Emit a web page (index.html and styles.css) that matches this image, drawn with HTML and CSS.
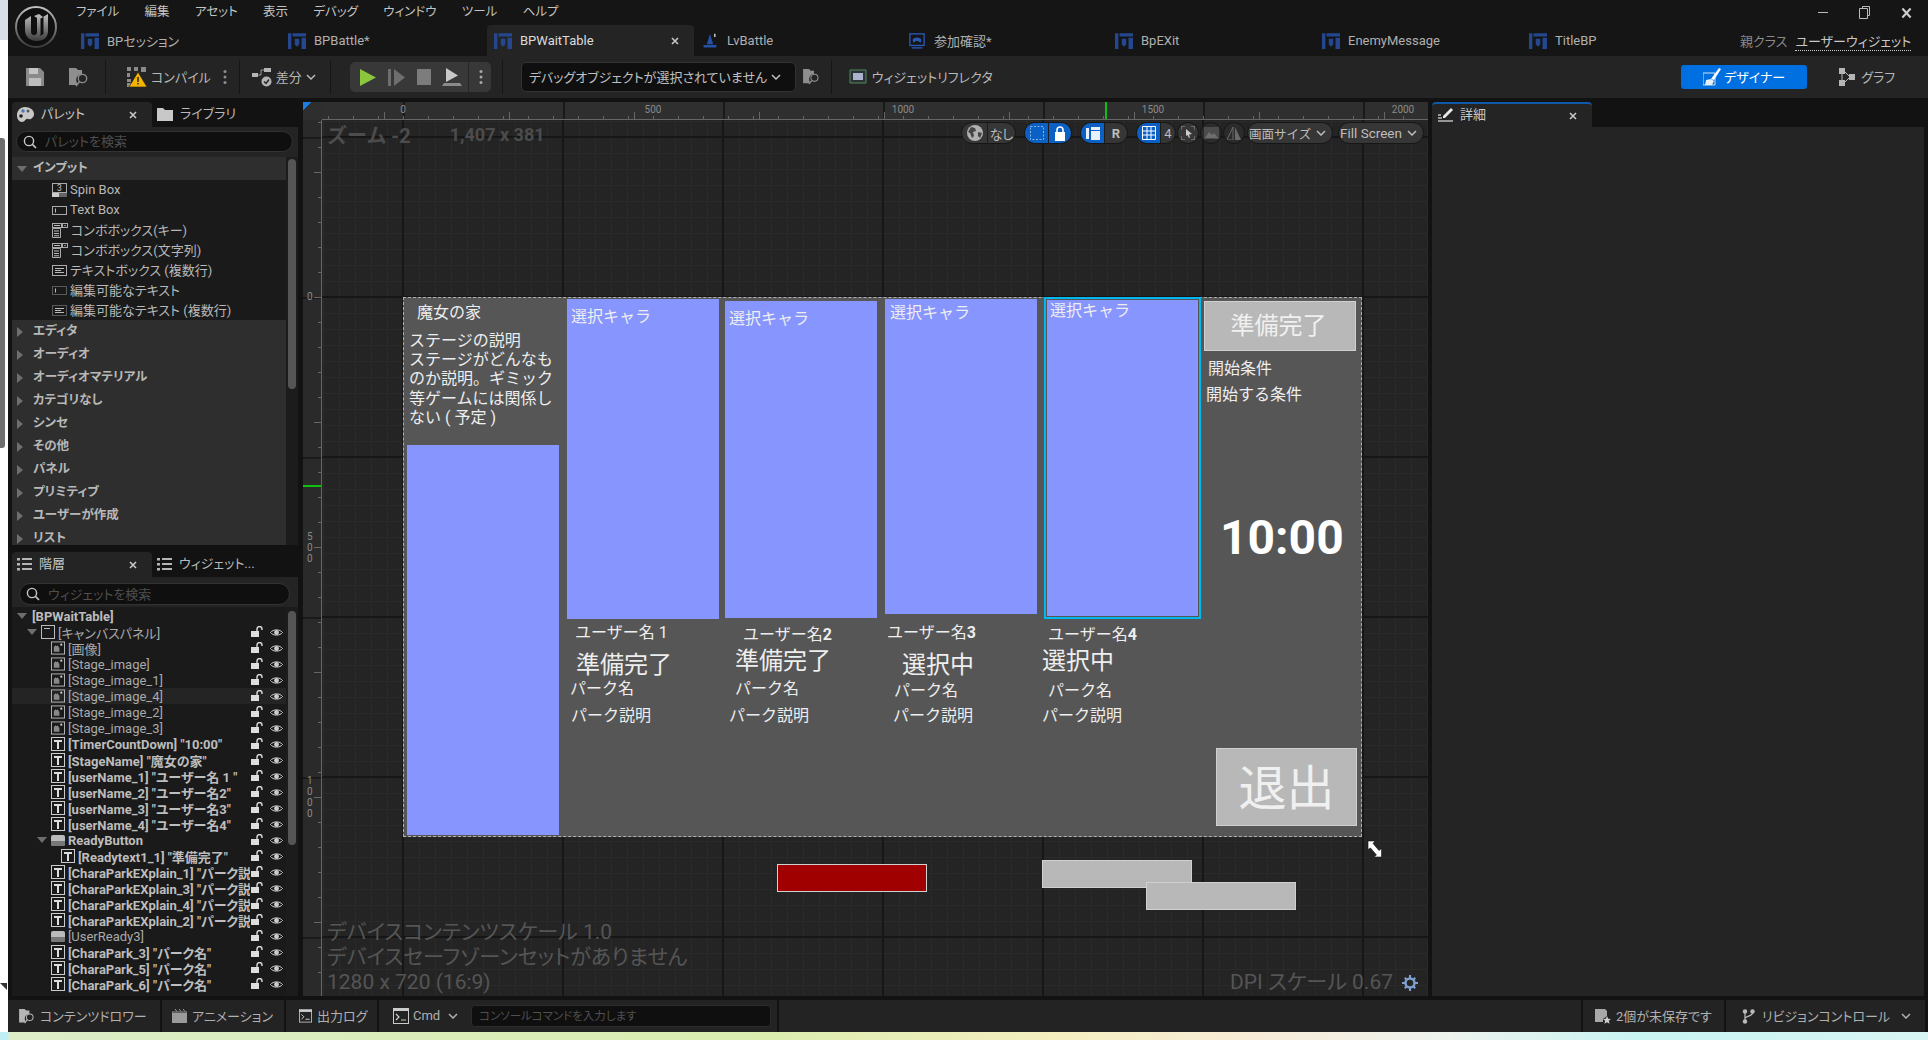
FILE: index.html
```html
<!DOCTYPE html>
<html lang="ja">
<head>
<title>BPWaitTable</title>
<meta charset="utf-8">
<link rel="stylesheet" href="styles.css">
</head>
<body>

<svg class="defs" width="0" height="0">
  <defs>
    <linearGradient id="logo-grad" x1="0" y1="0" x2="0" y2="1">
      <stop offset="0" stop-color="#c0c0c0"/><stop offset="1" stop-color="#3c3c3c"/>
    </linearGradient>
    <symbol id="i-bp" viewBox="0 0 16 14">
      <path d="M0 0h3v14H0zM4 0h12v3H4zM12 4h4v10h-4zM6 5h4v5l-2 2-2-2z" fill="#24478f"/>
    </symbol>
    <symbol id="i-chev" viewBox="0 0 10 6">
      <path d="M1 1l4 4 4-4" fill="none" stroke="currentColor" stroke-width="1.5"/>
    </symbol>
    <symbol id="i-x" viewBox="0 0 8 8">
      <path d="M1 1l6 6M7 1L1 7" stroke="currentColor" stroke-width="1.6"/>
    </symbol>
    <symbol id="i-search" viewBox="0 0 14 14">
      <circle cx="6" cy="6" r="4.6" fill="none" stroke="currentColor" stroke-width="1.4"/>
      <path d="M9.4 9.4L13 13" stroke="currentColor" stroke-width="1.6"/>
    </symbol>
    <symbol id="i-dots" viewBox="0 0 4 16">
      <circle cx="2" cy="2.5" r="1.5" fill="currentColor"/><circle cx="2" cy="8" r="1.5" fill="currentColor"/><circle cx="2" cy="13.5" r="1.5" fill="currentColor"/>
    </symbol>
    <symbol id="i-list" viewBox="0 0 15 13">
      <path d="M0 0h3v2.4H0zM5 0h10v2H5zM0 5h3v2.4H0zM5 5h10v2H5zM0 10h3v2.4H0zM5 10h10v2H5z" fill="#b5b5b5"/>
    </symbol>
    <symbol id="i-spin" viewBox="0 0 15 14">
      <rect x=".5" y=".5" width="14" height="9" fill="none" stroke="#aaa"/>
      <text x="7.5" y="8" font-size="8.5" text-anchor="middle" fill="#ccc" font-family="Roboto">3</text>
      <path d="M0 10h7v4H0z" fill="#ccc"/><path d="M7 10h8v4H7z" fill="#666"/>
    </symbol>
    <symbol id="i-textbox" viewBox="0 0 15 9">
      <rect x=".5" y=".5" width="14" height="8" fill="none" stroke="#aaa"/><path d="M3 2.5h1v4H3z" fill="#bbb"/>
    </symbol>
    <symbol id="i-combo" viewBox="0 0 16 15">
      <rect x=".5" y=".5" width="9" height="4" fill="none" stroke="#aaa"/>
      <rect x="10.5" y=".5" width="5" height="4" fill="none" stroke="#aaa"/>
      <path d="M2 2h6v1H2zM12 2h2l-1 1.4z" fill="#bbb"/>
      <path d="M.5 5.500h8v9h-8z" fill="none" stroke="#aaa"/>
      <path d="M2 7.500h5v1H2zM2 10h5v1H2zM2 12.300h5v1H2z" fill="#bbb"/>
    </symbol>
    <symbol id="i-multi" viewBox="0 0 15 11">
      <rect x=".5" y=".5" width="14" height="10" fill="none" stroke="#aaa"/>
      <path d="M3 3h9v1H3zM3 5h6v1H3zM3 7h9v1H3z" fill="#bbb"/>
    </symbol>
    <symbol id="i-edit" viewBox="0 0 15 9">
      <rect x=".5" y=".5" width="14" height="8" fill="none" stroke="#999" stroke-dasharray="1 1"/><path d="M3 2.500h1v4H3z" fill="#bbb"/>
    </symbol>
    <symbol id="i-editm" viewBox="0 0 15 11">
      <rect x=".5" y=".5" width="14" height="10" fill="none" stroke="#999" stroke-dasharray="1 1"/>
      <path d="M3 3h9v1H3zM3 5h6v1H3zM3 7h9v1H3z" fill="#bbb"/>
    </symbol>
    <symbol id="i-canvas" viewBox="0 0 14 14">
      <rect x=".5" y=".5" width="13" height="13" fill="none" stroke="#bbb"/><path d="M3 3h6v1H3z" fill="#bbb"/>
    </symbol>
    <symbol id="i-img" viewBox="0 0 15 14">
      <rect x=".5" y=".5" width="14" height="13" fill="none" stroke="#bbb"/>
      <path d="M3 11V6l2-2 1 1 1-1 2 3v4z" fill="#888"/><circle cx="11" cy="3.500" r="1.200" fill="#ccc"/>
    </symbol>
    <symbol id="i-t" viewBox="0 0 14 14">
      <rect x=".5" y=".5" width="13" height="13" fill="none" stroke="#ccc"/>
      <path d="M3 3h8v2H8v7H6V5H3z" fill="#ddd"/>
    </symbol>
    <symbol id="i-btn" viewBox="0 0 14 11">
      <rect width="14" height="11" rx="2" fill="#bbb"/><path d="M0 6h14v3a2 2 0 0 1-2 2H2a2 2 0 0 1-2-2z" fill="#777"/>
    </symbol>
    <symbol id="i-lock" viewBox="0 0 12 11">
      <path d="M0 5h8v6H0z" fill="#ddd"/>
      <path d="M6 5V3a2.500 2.500 0 0 1 5 0v1" fill="none" stroke="#ddd" stroke-width="1.400"/>
    </symbol>
    <symbol id="i-eye" viewBox="0 0 13 9">
      <path d="M.5 4.500C3 1 10 1 12.500 4.500 10 8 3 8 .5 4.500z" fill="none" stroke="#ccc"/>
      <circle cx="6.500" cy="4.500" r="2.400" fill="#ccc"/>
    </symbol>
    <symbol id="i-folder" viewBox="0 0 16 13">
      <path d="M0 0h6l2 2h8v11H0z" fill="#c8c8c8"/>
    </symbol>
    <symbol id="i-findfolder" viewBox="0 0 20 19">
      <path d="M0 0h7l2 2h4v4a6 6 0 0 0-5 9v2H0z" fill="currentColor"/>
      <circle cx="13.500" cy="10.500" r="4.200" fill="none" stroke="currentColor" stroke-width="1.300"/>
      <path d="M10.500 13.500L7 18" stroke="currentColor" stroke-width="1.500"/>
    </symbol>
    <symbol id="i-term" viewBox="0 0 16 16">
      <rect x=".5" y=".5" width="15" height="15" fill="none" stroke="#ccc"/>
      <path d="M0 0h16v3H0z" fill="#ccc"/><path d="M3 6l3 3-3 3M8 12h5" fill="none" stroke="#ccc" stroke-width="1.200"/>
    </symbol>
  </defs>
</svg>

<div class="screen">
  <aside class="side-strip">
    <div class="strip-top"></div>
    <div class="strip-thumb"></div>
    <div class="strip-corner"></div>
  </aside>

  <div class="window">

    <header class="titlebar">
      <svg class="logo" viewBox="0 0 42 42" width="42" height="42">
        <circle cx="21" cy="21" r="20" fill="#101010" stroke="url(#logo-grad)" stroke-width="2"/>
        <path d="M10 14l6-4v16c0 4 5 4 6 1V12l-3-2 5-2 4 3v0l5-3v17c0 6-4 10-11 10-7 0-12-4-12-11z" fill="url(#logo-grad)"/>
        <path d="M25.500 12.500l3-1.500v17l-3 2z" fill="#101010"/>
      </svg>
      <div class="title-main">
        <div class="menu-row">
          <nav class="menu">
            <span>ファイル</span><span>編集</span><span>アセット</span><span>表示</span><span>デバッグ</span><span>ウィンドウ</span><span>ツール</span><span>ヘルプ</span>
          </nav>
          <div class="win-buttons">
            <span class="win-min"></span>
            <svg width="11" height="13" viewBox="0 0 11 13"><path d="M3.500 2.500V.5h7v9h-2M.5 2.500h8v10h-8z" fill="none" stroke="#bbb"/></svg>
            <svg width="11" height="12" viewBox="0 0 8 8" preserveAspectRatio="none"><use href="#i-x" color="#ccc"/></svg>
          </div>
        </div>
        <div class="tab-row">
          <div class="doc-tab"><svg class="doc-icon"><use href="#i-bp"/></svg>BPセッション</div>
          <div class="doc-tab"><svg class="doc-icon"><use href="#i-bp"/></svg>BPBattle*</div>
          <div class="doc-tab active"><svg class="doc-icon"><use href="#i-bp"/></svg>BPWaitTable<svg class="tab-x"><use href="#i-x"/></svg></div>
          <div class="doc-tab"><svg class="doc-icon" viewBox="0 0 18 20"><path d="M9 1l4 13H5zM1 15h16v3H1z" fill="#2450a8"/><path d="M14 1h2v4h-2z" fill="#bbb"/></svg>LvBattle</div>
          <div class="doc-tab"><svg class="doc-icon" viewBox="0 0 18 18"><rect x="1" y="1" width="16" height="13" fill="none" stroke="#2a58b8" stroke-width="1.500"/><path d="M4 8c1-4 9-4 10 0l-1 3-3-2H8l-3 2z" fill="#2a58b8"/><path d="M3 16h12v1.500H3z" fill="#2a58b8"/></svg>参加確認*</div>
          <div class="doc-tab"><svg class="doc-icon"><use href="#i-bp"/></svg>BpEXit</div>
          <div class="doc-tab"><svg class="doc-icon"><use href="#i-bp"/></svg>EnemyMessage</div>
          <div class="doc-tab"><svg class="doc-icon"><use href="#i-bp"/></svg>TitleBP</div>
          <div class="parent-class"><span class="parent-label">親クラス</span><span class="parent-link">ユーザーウィジェット</span></div>
        </div>
      </div>
    </header>

    <div class="toolbar">
      <svg class="tool-save" width="18" height="18" viewBox="0 0 18 18"><path d="M0 0h14l4 4v14H0z" fill="#8a8a8a"/><path d="M3 0h9v6H3z" fill="#c4c4c4"/><path d="M3 10h12v8H3z" fill="#bdbdbd"/></svg>
      <svg class="tool-find" width="20" height="19"><use href="#i-findfolder"/></svg>
      <i class="tool-sep sep-a"></i>
      <svg class="tool-compile" width="20" height="20" viewBox="0 0 20 20">
        <path d="M0 0h4v4H0zM7 0h4v4H7zM14 0h5v5h-5zM0 6h3v4H0zM0 12h4v3H0zM0 16h4v4H0z" fill="#8a8a8a"/>
        <path d="M11 5L20 20H2z" fill="#f5b400" stroke="#1c1c1c" stroke-width=".6"/><path d="M10.300 10h1.400v5h-1.400zM10.300 16h1.400v1.500h-1.400z" fill="#1c1c1c"/>
      </svg>
      <span class="tool-text compile-text">コンパイル</span>
      <svg class="tool-dots" width="4" height="16"><use href="#i-dots"/></svg>
      <i class="tool-sep sep-b"></i>
      <svg class="tool-diff" width="20" height="20" viewBox="0 0 20 20"><path d="M0 6h6v4H0zM12 1h7v4h-7z" fill="#b5b5b5"/><path d="M6 8h3V3h3" fill="none" stroke="#999"/><circle cx="14.500" cy="14.500" r="5" fill="#b5b5b5"/><path d="M12 14.500l2 2 3-4" fill="none" stroke="#222" stroke-width="1.400"/></svg>
      <span class="tool-text diff-text">差分</span>
      <svg class="tool-chev" width="10" height="6"><use href="#i-chev"/></svg>
      <i class="tool-sep sep-c"></i>
      <div class="play-group">
        <svg class="pg-play" width="16" height="17" viewBox="0 0 16 17"><path d="M0 0l16 8.500L0 17z" fill="#8cc63f"/></svg>
        <svg class="pg-step" width="17" height="17" viewBox="0 0 17 17"><path d="M0 0h3v17H0z" fill="#6e6e6e"/><path d="M6 0l11 8.500L6 17z" fill="#6e6e6e"/></svg>
        <svg class="pg-stop" width="14" height="16"><rect width="14" height="16" fill="#7c7c7c"/></svg>
        <svg class="pg-possess" width="20" height="18" viewBox="0 0 20 18"><path d="M4 0l12 7.500L4 14z" fill="#c8c8c8"/><path d="M2 15h16l2 3H0z" fill="#8a8a8a"/></svg>
        <i class="pg-divider"></i>
        <svg class="pg-dots" width="4" height="16"><use href="#i-dots"/></svg>
      </div>
      <i class="tool-sep sep-d"></i>
      <div class="debug-select"><span>デバッグオブジェクトが選択されていません</span><svg width="10" height="6"><use href="#i-chev"/></svg></div>
      <svg class="tool-find2" width="17" height="16" viewBox="0 0 20 19"><use href="#i-findfolder"/></svg>
      <i class="tool-sep sep-e"></i>
      <svg class="tool-reflect" width="18" height="16" viewBox="0 0 18 16"><path d="M1 1h16v13H1z" fill="#2c3238" stroke="#4e8a5a"/><path d="M4 4h10v7H4z" fill="#aab4cc"/></svg>
      <span class="tool-text">ウィジェットリフレクタ</span>
      <div class="designer-btn">
        <svg width="18" height="18" viewBox="0 0 18 18"><path d="M0 5h12v12H0z" fill="none" stroke="#cfe2f7"/><path d="M16 0l2 1-7 11-3-1z" fill="#fff"/><path d="M3 12l5-1 3 2-2 4H2z" fill="#e6eef8"/></svg>
        <span>デザイナー</span>
      </div>
      <svg class="graph-icon" width="16" height="18" viewBox="0 0 16 18"><path d="M0 0h6v6H0zM10 6h6v6h-6zM0 12h6v6H0z" fill="#b5b5b5"/><path d="M3 6v6M6 4l4 4M6 14l4-4" stroke="#b5b5b5"/></svg>
      <span class="tool-text graph-text">グラフ</span>
    </div>

    <main class="workspace">

      <div class="left-col">
        <section class="panel palette">
          <div class="panel-tabs">
            <div class="panel-tab active">
              <svg width="17" height="15" viewBox="0 0 17 15"><path d="M8 0c5 0 9 3 9 7s-4 6-6 5-3 3-6 3-5-3-5-7 3-8 8-8z" fill="#c8c8c8"/><circle cx="6" cy="4" r="1.800" fill="#4a78b8"/><circle cx="11" cy="4" r="1.500" fill="#5a5a5a"/><circle cx="4" cy="9" r="1.800" fill="#1c1c1c"/></svg>
              <span>パレット</span><svg class="tab-x"><use href="#i-x"/></svg>
            </div>
            <div class="panel-tab"><svg width="16" height="13"><use href="#i-folder"/></svg><span>ライブラリ</span></div>
          </div>
          <div class="search-wrap"><div class="search"><svg width="14" height="14"><use href="#i-search"/></svg><span>パレットを検索</span></div></div>
          <div class="panel-scroll">
            <div class="palette-list">
              <div class="cat open"><i class="arrow down"></i><span>インプット</span></div>
              <div class="item"><svg width="15" height="14"><use href="#i-spin"/></svg><span>Spin Box</span></div>
              <div class="item"><svg width="15" height="9"><use href="#i-textbox"/></svg><span>Text Box</span></div>
              <div class="item"><svg width="16" height="15"><use href="#i-combo"/></svg><span>コンボボックス(キー)</span></div>
              <div class="item"><svg width="16" height="15"><use href="#i-combo"/></svg><span>コンボボックス(文字列)</span></div>
              <div class="item"><svg width="15" height="11"><use href="#i-multi"/></svg><span>テキストボックス (複数行)</span></div>
              <div class="item"><svg width="15" height="9"><use href="#i-edit"/></svg><span>編集可能なテキスト</span></div>
              <div class="item"><svg width="15" height="11"><use href="#i-editm"/></svg><span>編集可能なテキスト (複数行)</span></div>
              <div class="cat"><i class="arrow"></i><span>エディタ</span></div>
              <div class="cat"><i class="arrow"></i><span>オーディオ</span></div>
              <div class="cat"><i class="arrow"></i><span>オーディオマテリアル</span></div>
              <div class="cat"><i class="arrow"></i><span>カテゴリなし</span></div>
              <div class="cat"><i class="arrow"></i><span>シンセ</span></div>
              <div class="cat"><i class="arrow"></i><span>その他</span></div>
              <div class="cat"><i class="arrow"></i><span>パネル</span></div>
              <div class="cat"><i class="arrow"></i><span>プリミティブ</span></div>
              <div class="cat"><i class="arrow"></i><span>ユーザーが作成</span></div>
              <div class="cat"><i class="arrow"></i><span>リスト</span></div>
            </div>
            <div class="scroll-track"><div class="scroll-thumb thumb-palette"></div></div>
          </div>
        </section>

        <section class="panel hierarchy">
          <div class="panel-tabs">
            <div class="panel-tab active"><svg width="15" height="13"><use href="#i-list"/></svg><span>階層</span><svg class="tab-x"><use href="#i-x"/></svg></div>
            <div class="panel-tab"><svg width="15" height="13"><use href="#i-list"/></svg><span>ウィジェット...</span></div>
          </div>
          <div class="search-wrap"><div class="search short"><svg width="14" height="14"><use href="#i-search"/></svg><span>ウィジェットを検索</span></div></div>
          <div class="panel-scroll">
            <div class="tree">
              <div class="row lv0 bold"><i class="arrow down"></i><span class="name">[BPWaitTable]</span></div>
              <div class="row lv1"><i class="arrow down"></i><svg class="ico"><use href="#i-canvas"/></svg><span class="name">[キャンバスパネル]</span><svg class="lock"><use href="#i-lock"/></svg><svg class="eye"><use href="#i-eye"/></svg></div>
              <div class="row lv2"><svg class="ico"><use href="#i-img"/></svg><span class="name">[画像]</span><svg class="lock"><use href="#i-lock"/></svg><svg class="eye"><use href="#i-eye"/></svg></div>
              <div class="row lv2"><svg class="ico"><use href="#i-img"/></svg><span class="name">[Stage_image]</span><svg class="lock"><use href="#i-lock"/></svg><svg class="eye"><use href="#i-eye"/></svg></div>
              <div class="row lv2"><svg class="ico"><use href="#i-img"/></svg><span class="name">[Stage_image_1]</span><svg class="lock"><use href="#i-lock"/></svg><svg class="eye"><use href="#i-eye"/></svg></div>
              <div class="row lv2 hover"><svg class="ico"><use href="#i-img"/></svg><span class="name">[Stage_image_4]</span><svg class="lock"><use href="#i-lock"/></svg><svg class="eye"><use href="#i-eye"/></svg></div>
              <div class="row lv2"><svg class="ico"><use href="#i-img"/></svg><span class="name">[Stage_image_2]</span><svg class="lock"><use href="#i-lock"/></svg><svg class="eye"><use href="#i-eye"/></svg></div>
              <div class="row lv2"><svg class="ico"><use href="#i-img"/></svg><span class="name">[Stage_image_3]</span><svg class="lock"><use href="#i-lock"/></svg><svg class="eye"><use href="#i-eye"/></svg></div>
              <div class="row lv2 bold"><svg class="ico"><use href="#i-t"/></svg><span class="name">[TimerCountDown] "10:00"</span><svg class="lock"><use href="#i-lock"/></svg><svg class="eye"><use href="#i-eye"/></svg></div>
              <div class="row lv2 bold"><svg class="ico"><use href="#i-t"/></svg><span class="name">[StageName] "魔女の家"</span><svg class="lock"><use href="#i-lock"/></svg><svg class="eye"><use href="#i-eye"/></svg></div>
              <div class="row lv2 bold"><svg class="ico"><use href="#i-t"/></svg><span class="name">[userName_1] "ユーザー名 1 "</span><svg class="lock"><use href="#i-lock"/></svg><svg class="eye"><use href="#i-eye"/></svg></div>
              <div class="row lv2 bold"><svg class="ico"><use href="#i-t"/></svg><span class="name">[userName_2] "ユーザー名2"</span><svg class="lock"><use href="#i-lock"/></svg><svg class="eye"><use href="#i-eye"/></svg></div>
              <div class="row lv2 bold"><svg class="ico"><use href="#i-t"/></svg><span class="name">[userName_3] "ユーザー名3"</span><svg class="lock"><use href="#i-lock"/></svg><svg class="eye"><use href="#i-eye"/></svg></div>
              <div class="row lv2 bold"><svg class="ico"><use href="#i-t"/></svg><span class="name">[userName_4] "ユーザー名4"</span><svg class="lock"><use href="#i-lock"/></svg><svg class="eye"><use href="#i-eye"/></svg></div>
              <div class="row lv1b bold"><i class="arrow down"></i><svg class="ico btn"><use href="#i-btn"/></svg><span class="name">ReadyButton</span><svg class="lock"><use href="#i-lock"/></svg><svg class="eye"><use href="#i-eye"/></svg></div>
              <div class="row lv3 bold"><svg class="ico"><use href="#i-t"/></svg><span class="name">[Readytext1_1] "準備完了"</span><svg class="lock"><use href="#i-lock"/></svg><svg class="eye"><use href="#i-eye"/></svg></div>
              <div class="row lv2 bold"><svg class="ico"><use href="#i-t"/></svg><span class="name">[CharaParkEXplain_1] "パーク説明"</span><svg class="lock"><use href="#i-lock"/></svg><svg class="eye"><use href="#i-eye"/></svg></div>
              <div class="row lv2 bold"><svg class="ico"><use href="#i-t"/></svg><span class="name">[CharaParkEXplain_3] "パーク説明"</span><svg class="lock"><use href="#i-lock"/></svg><svg class="eye"><use href="#i-eye"/></svg></div>
              <div class="row lv2 bold"><svg class="ico"><use href="#i-t"/></svg><span class="name">[CharaParkEXplain_4] "パーク説明"</span><svg class="lock"><use href="#i-lock"/></svg><svg class="eye"><use href="#i-eye"/></svg></div>
              <div class="row lv2 bold"><svg class="ico"><use href="#i-t"/></svg><span class="name">[CharaParkEXplain_2] "パーク説明"</span><svg class="lock"><use href="#i-lock"/></svg><svg class="eye"><use href="#i-eye"/></svg></div>
              <div class="row lv2"><svg class="ico btn"><use href="#i-btn"/></svg><span class="name">[UserReady3]</span><svg class="lock"><use href="#i-lock"/></svg><svg class="eye"><use href="#i-eye"/></svg></div>
              <div class="row lv2 bold"><svg class="ico"><use href="#i-t"/></svg><span class="name">[CharaPark_3] "パーク名"</span><svg class="lock"><use href="#i-lock"/></svg><svg class="eye"><use href="#i-eye"/></svg></div>
              <div class="row lv2 bold"><svg class="ico"><use href="#i-t"/></svg><span class="name">[CharaPark_5] "パーク名"</span><svg class="lock"><use href="#i-lock"/></svg><svg class="eye"><use href="#i-eye"/></svg></div>
              <div class="row lv2 bold"><svg class="ico"><use href="#i-t"/></svg><span class="name">[CharaPark_6] "パーク名"</span><svg class="lock"><use href="#i-lock"/></svg><svg class="eye"><use href="#i-eye"/></svg></div>
            </div>
            <div class="scroll-track"><div class="scroll-thumb thumb-tree"></div></div>
          </div>
        </section>
      </div>

      <section class="canvas">
        <div class="ruler-corner"></div>
        <div class="ruler-top">
          <span class="rt-label rt-0">0</span>
          <span class="rt-label rt-500">500</span>
          <span class="rt-label rt-1000">1000</span>
          <span class="rt-label rt-1500">1500</span>
          <span class="rt-label rt-2000">2000</span>
          <i class="rt-green"></i>
        </div>
        <div class="ruler-left">
          <span class="rl-label rl-0">0</span>
          <span class="rl-label rl-500">5<br>0<br>0</span>
          <span class="rl-label rl-1000">1<br>0<br>0<br>0</span>
          <i class="rl-green"></i>
        </div>

        <div class="stage">
          <div class="zoom-text"><span>ズーム -2</span><span class="zoom-size">1,407 x 381</span></div>

          <div class="stage-tools">
            <div class="pill">
              <span class="seg seg-globe"><svg width="16" height="16" viewBox="0 0 16 16"><circle cx="8" cy="8" r="8" fill="#b0b0b0"/><path d="M4 2l4 1 1 3-3 1 1 4-2 2-2-5-2-1zM11 7l4 1-2 5-2-2z" fill="#444"/></svg></span>
              <span class="seg seg-nashi">なし</span>
            </div>
            <div class="pill">
              <span class="seg on seg-box"><svg width="14" height="14"><rect x=".5" y=".5" width="13" height="13" fill="none" stroke="#8ab4e8" stroke-dasharray="2 1.500"/></svg></span>
              <span class="seg on seg-lock"><svg width="12" height="15" viewBox="0 0 12 15"><path d="M1 6h10v9H1z" fill="#fff"/><path d="M3 6V4a3 3 0 0 1 6 0v2" fill="none" stroke="#fff" stroke-width="1.600"/></svg></span>
            </div>
            <div class="pill">
              <span class="seg on seg-box"><svg width="14" height="13" viewBox="0 0 14 13"><path d="M0 1h3v11H0zM5 0h9v3H5zM5 4h9v9H5z" fill="#e8f0fb"/></svg></span>
              <span class="seg seg-r">R</span>
            </div>
            <div class="pill">
              <span class="seg on seg-box"><svg width="14" height="14" viewBox="0 0 14 14"><path d="M.5.500h13v13H.5zM5 .500v13M9 .500v13M.5 5h13M.5 9h13" fill="none" stroke="#fff"/></svg></span>
              <span class="seg seg-four">4</span>
            </div>
            <div class="pill round"><svg width="14" height="14" viewBox="0 0 14 14"><path d="M0 4V0h4M10 0h4v4M14 10v4h-4M4 14H0v-4" fill="none" stroke="#999"/><path d="M5 3l6 5-3 .500 1 3-1 .500-1.500-3L5 10z" fill="#ccc"/></svg></div>
            <div class="pill round dim"><svg width="15" height="12" viewBox="0 0 15 12"><path d="M0 0h15v12H0z" fill="#4c4c4c"/><path d="M1 11l4-6 3 3 2-2 4 5z" fill="#6e6e6e"/></svg></div>
            <div class="pill round dim"><svg width="16" height="14" viewBox="0 0 16 14"><path d="M7 1v13H1z" fill="none" stroke="#6a6a6a"/><path d="M9 1v13h6z" fill="#6a6a6a"/></svg></div>
            <div class="pill select size-sel">画面サイズ<svg width="10" height="6"><use href="#i-chev"/></svg></div>
            <div class="pill select fill-sel">Fill Screen<svg width="10" height="6"><use href="#i-chev"/></svg></div>
          </div>

          <div class="design">
            <div class="w-text name-stage">魔女の家</div>
            <div class="w-text stage-desc">ステージの説明<br>ステージがどんなも<br>のか説明。ギミック<br>等ゲームには関係し<br>ない ( 予定 )</div>

            <div class="w-image img-stage"></div>
            <div class="w-image img-c1"></div>
            <div class="w-image img-c2"></div>
            <div class="w-image img-c3"></div>
            <div class="w-image img-c4"></div>

            <div class="w-text pick p1">選択キャラ</div>
            <div class="w-text pick p2">選択キャラ</div>
            <div class="w-text pick p3">選択キャラ</div>
            <div class="w-text pick p4">選択キャラ</div>

            <div class="w-text u1">ユーザー名 1</div>
            <div class="w-text u2">ユーザー名<b>2</b></div>
            <div class="w-text u3">ユーザー名<b>3</b></div>
            <div class="w-text u4">ユーザー名<b>4</b></div>

            <div class="w-text big s1">準備完了</div>
            <div class="w-text big s2">準備完了</div>
            <div class="w-text big s3">選択中</div>
            <div class="w-text big s4">選択中</div>

            <div class="w-text n1">パーク名</div>
            <div class="w-text n2">パーク名</div>
            <div class="w-text n3">パーク名</div>
            <div class="w-text n4">パーク名</div>

            <div class="w-text e1">パーク説明</div>
            <div class="w-text e2">パーク説明</div>
            <div class="w-text e3">パーク説明</div>
            <div class="w-text e4">パーク説明</div>

            <div class="w-button ready">準備完了</div>
            <div class="w-text cond1">開始条件</div>
            <div class="w-text cond2">開始する条件</div>
            <div class="w-text timer">10:00</div>
            <div class="w-button leave">退出</div>
          </div>

          <div class="off-red"></div>
          <div class="off-gray g1"></div>
          <div class="off-gray g2"></div>
          <svg class="resize-cursor" width="18" height="18" viewBox="0 0 18 18"><path d="M1 1h7L6 3.500l6 7L14.500 8.500V17H7l2.500-2-6-7L1 9.500z" fill="#fff" stroke="#111" stroke-width=".6"/></svg>

          <div class="device-info">
            <span>デバイスコンテンツスケール 1.0</span>
            <span>デバイスセーフゾーンセットがありません</span>
            <span>1280 x 720 (16:9)</span>
          </div>
          <div class="dpi"><span>DPI スケール 0.67</span>
            <svg width="16" height="16" viewBox="0 0 16 16"><circle cx="8" cy="8" r="4.500" fill="none" stroke="#7f9fd0" stroke-width="2.500"/><path d="M7 0h2v3H7zM7 13h2v3H7zM0 7h3v2H0zM13 7h3v2h-3zM2 3.500L3.500 2l2 2L4 5.500zM10.500 12l1.500-1.500 2 2L12.500 14zM12.500 2L14 3.500l-2 2L10.500 4zM4 10.500L5.500 12l-2 2L2 12.500z" fill="#7f9fd0"/></svg>
          </div>
        </div>
      </section>

      <section class="details">
        <div class="panel-tabs">
          <div class="panel-tab active detail-tab">
            <svg width="15" height="15" viewBox="0 0 15 15"><path d="M13 0l2 2-8 8H5V8z" fill="#e8e8e8"/><path d="M0 10h4M0 13h15M0 7h3" stroke="#bbb" stroke-width="1.300"/></svg>
            <span>詳細</span><svg class="tab-x"><use href="#i-x"/></svg>
          </div>
        </div>
        <div class="details-body"></div>
      </section>
    </main>

    <footer class="statusbar">
      <div class="st-item st-drawer"><svg width="16" height="15" viewBox="0 0 20 19"><use href="#i-findfolder" color="#b5b5b5"/></svg><span>コンテンツドロワー</span></div>
      <div class="st-item st-anim"><svg width="15" height="14" viewBox="0 0 15 14"><path d="M0 5h15v9H0z" fill="#9a9a9a"/><path d="M0 3h15v1.500H0zM3 0l2 2.500M7 0l2 2.500M11 0l2 2.500" stroke="#9a9a9a" fill="none"/></svg><span>アニメーション</span></div>
      <div class="st-item st-log"><svg width="13" height="16"><use href="#i-term"/></svg><span>出力ログ</span></div>
      <div class="st-item st-cmd">
        <svg width="16" height="16"><use href="#i-term"/></svg><span>Cmd</span><svg class="cmd-chev" width="10" height="6"><use href="#i-chev"/></svg>
        <div class="cmd-input">コンソールコマンドを入力します</div>
      </div>
      <div class="st-fill"></div>
      <div class="st-item st-unsaved"><svg width="16" height="15" viewBox="0 0 16 15"><path d="M0 0h10l2 2v5l-4 3v3H0z" fill="#a8a8a8"/><path d="M12 7l1.200 2.800 2.800.2-2.200 1.800.8 3-2.600-1.600-2.600 1.600.8-3L8 10l2.800-.2z" fill="#cfcfcf"/></svg><span>2個が未保存です</span></div>
      <div class="st-item st-rev"><svg width="13" height="15" viewBox="0 0 13 15"><circle cx="3" cy="2.500" r="2.200" fill="#bbb"/><circle cx="3" cy="12.500" r="2.200" fill="#bbb"/><circle cx="10.500" cy="2.500" r="2.200" fill="#bbb"/><path d="M3 3v8M10.500 4c0 3-6 3-7 5" fill="none" stroke="#bbb" stroke-width="1.200"/></svg><span>リビジョンコントロール</span><svg class="cmd-chev" width="10" height="6"><use href="#i-chev"/></svg></div>
    </footer>
  </div>
</div>

<div class="desk-strip"></div>

</body>
</html>
```

FILE: styles.css
```css
* {
  box-sizing: border-box;
}

html, body {
  margin: 0;
  height: 100%;
  overflow: hidden;
}

body {
  display: flex;
  flex-direction: column;
  background: #fff;
  font-family: Roboto, "Noto Sans CJK JP", sans-serif;
  font-size: 13px;
  color: #c0c0c0;
  font-feature-settings: "palt";
}

.defs {
  position: absolute;
}

svg {
  flex: none;
  display: block;
}

.screen {
  display: flex;
  height: 1032px;
}

.desk-strip {
  height: 8px;
  background: linear-gradient(to right, #bfeef5 0, #bfeef5 8px, #dcedc8 9px, #dcedb0 40%, #f5eec0 55%, #f8ecd8 65%, #eef3ee 75%, #c8f4f2 85%, #d8f6f4 100%);
}

/* Bit of the desktop left of the editor window */
.side-strip {
  flex: none;
  width: 8px;
  display: flex;
  flex-direction: column;
  background: #fff;
}

.strip-top {
  height: 40px;
  background: #d8dfe8;
}

.strip-thumb {
  width: 5px;
  height: 310px;
  margin-top: 98px;
  border-radius: 0 3px 3px 0;
  background: #6e6e6e;
}

.strip-corner {
  width: 0;
  height: 0;
  margin-top: 535px;
  border-top: 7px solid #333;
  border-left: 7px solid transparent;
}

.window {
  flex: 1;
  min-width: 0;
  display: flex;
  flex-direction: column;
  background: #121212;
}

/* Title bar and document tabs */
.titlebar {
  flex: none;
  height: 56px;
  display: flex;
  background: #151515;
}

.logo {
  margin: 6px 0 0 7px;
}

.title-main {
  flex: 1;
  display: flex;
  flex-direction: column;
  margin-left: 17px;
}

.menu-row {
  height: 25px;
  display: flex;
  align-items: center;
}

.menu {
  display: flex;
  gap: 25.300px;
  padding: 0 0 4px 2px;
  font-size: 12.500px;
  color: #c4c4c4;
}

.win-buttons {
  margin-left: auto;
  display: flex;
  align-items: center;
  gap: 31px;
  padding-right: 16px;
}

.win-min {
  width: 10px;
  height: 1px;
  background: #bbb;
}

.tab-row {
  flex: 1;
  display: flex;
}

.doc-tab {
  width: 207px;
  display: flex;
  align-items: center;
  gap: 8px;
  padding-left: 7px;
  font-size: 13px;
  color: #b0b0b0;
}

.doc-tab.active {
  margin-left: -1px;
  border-radius: 4px 4px 0 0;
  background: #242424;
  color: #dcdcdc;
}

.doc-icon {
  width: 18px;
  height: 16px;
}

.tab-x {
  width: 8px;
  height: 8px;
  margin-left: auto;
  margin-right: 15px;
  color: #c8c8c8;
}

.parent-class {
  display: flex;
  align-items: center;
  gap: 8px;
  margin-left: 11px;
  font-size: 13px;
}

.parent-label {
  color: #8a8a8a;
}

.parent-link {
  color: #c8c8c8;
  border-bottom: 1px dotted #c8c8c8;
}

/* Main toolbar */
.toolbar {
  flex: none;
  height: 42px;
  display: flex;
  align-items: center;
  background: #242424;
}

.toolbar > svg {
  color: #8e8e8e;
}

.tool-text {
  padding-bottom: 2px;
  font-size: 13px;
  color: #b8b8b8;
}

.tool-sep {
  flex: none;
  width: 1px;
  height: 34px;
  background: #161616;
}

.tool-save { margin-left: 18px; }
.tool-find { margin-left: 25px; }
.sep-a { margin-left: 16px; }
.tool-compile { margin-left: 21px; }
.compile-text { margin-left: 4px; }
.tool-dots { margin-left: 12px; }
.sep-b { margin-left: 12px; }
.tool-diff { margin-left: 12px; }
.diff-text { margin-left: 4px; }
.tool-chev { margin-left: 4px; color: #b8b8b8 !important; }
.sep-c { margin-left: 14px; }
.sep-d { margin-left: 11px; }
.tool-find2 { margin-left: 7px; }
.sep-e { margin-left: 11px; }
.tool-reflect { margin: 0 5px 0 17px; }

.play-group {
  flex: none;
  width: 141px;
  height: 30px;
  margin-left: 19px;
  display: flex;
  align-items: center;
  border-radius: 5px;
  background: #383838;
  color: #a8a8a8;
}

.pg-play { margin-left: 10px; }
.pg-step { margin-left: 12px; }
.pg-stop { margin-left: 12px; }
.pg-possess { margin-left: 11px; }

.pg-divider {
  width: 1px;
  height: 30px;
  margin-left: 6px;
  background: #262626;
}

.pg-dots { margin-left: 10px; }

.debug-select {
  flex: none;
  width: 275px;
  height: 30px;
  margin-left: 18px;
  padding: 0 14px 0 7px;
  display: flex;
  align-items: center;
  justify-content: space-between;
  border: 1px solid #333;
  border-radius: 5px;
  background: #0f0f0f;
  font-size: 13px;
  color: #c0c0c0;
}

.debug-select span {
  padding-bottom: 2px;
}

.designer-btn {
  flex: none;
  width: 126px;
  height: 24px;
  margin-left: auto;
  padding-left: 22px;
  display: flex;
  align-items: center;
  gap: 3px;
  border-radius: 3px;
  background: #0070e0;
  font-size: 13px;
  color: #fff;
}

.designer-btn span {
  padding-bottom: 2px;
}

.graph-icon { margin-left: 32px; }
.graph-text { margin: 0 33px 0 6px; }

/* Panels */
.workspace {
  flex: 1;
  min-height: 0;
  display: flex;
  padding-top: 4px;
}

.left-col {
  flex: none;
  width: 295px;
  padding: 0 5px 0 4px;
  display: flex;
  flex-direction: column;
  gap: 7px;
}

.panel {
  display: flex;
  flex-direction: column;
  min-height: 0;
}

.palette { height: 443px; }
.hierarchy { flex: 1; }

.panel-tabs {
  flex: none;
  height: 25px;
  display: flex;
}

.panel-tab {
  width: 140px;
  display: flex;
  align-items: center;
  gap: 7px;
  padding-left: 5px;
  font-size: 13px;
  color: #b8b8b8;
}

.panel-tab span {
  padding-bottom: 5px;
}

.panel-tab.active {
  border-radius: 4px 4px 0 0;
  background: #242424;
  color: #c8c8c8;
}

.panel-tab .tab-x {
  margin-right: 15px;
}

.search-wrap {
  flex: none;
  height: 30px;
  padding: 4px 5px 0 4px;
  background: #242424;
}

.search {
  height: 21px;
  display: flex;
  align-items: center;
  gap: 8px;
  padding-left: 6px;
  border: 1px solid #333;
  border-radius: 11px;
  background: #0f0f0f;
  font-size: 13px;
  color: #4e4e4e;
}

.search span {
  padding-bottom: 2px;
}

.search svg {
  color: #c8c8c8;
}

.search.short {
  margin: 2px 3px 0;
  height: 22px;
}

.panel-scroll {
  flex: 1;
  min-height: 0;
  display: flex;
  background: #242424;
}

.scroll-track {
  flex: none;
  width: 12px;
  padding: 2px 2px 0;
  background: #1c1c1c;
}

.scroll-thumb {
  border-radius: 4px;
  background: #555;
}

.thumb-palette { height: 230px; }
.thumb-tree { height: 234px; margin-top: 2px; }

/* Palette list */
.palette-list {
  flex: 1;
  min-width: 0;
  overflow: hidden;
  background: #1a1a1a;
}

.cat {
  height: 23px;
  display: flex;
  align-items: center;
  padding-left: 5px;
  background: #2e2e2e;
  font-size: 12.500px;
  line-height: 14px;
  font-weight: 700;
  color: #b8b8b8;
}

.cat span {
  padding-bottom: 2px;
}

.arrow {
  flex: none;
  width: 0;
  height: 0;
  margin-right: 10px;
  border-left: 6px solid #6e6e6e;
  border-top: 5px solid transparent;
  border-bottom: 5px solid transparent;
}

.arrow.down {
  border-left: 5px solid transparent;
  border-right: 5px solid transparent;
  border-top: 6px solid #6e6e6e;
  border-bottom: 0;
  margin-right: 6px;
}

.item {
  height: 20px;
  display: flex;
  align-items: center;
  padding-left: 40px;
  color: #b8b8b8;
}

.item span {
  padding-bottom: 2px;
}

.item svg {
  margin-right: 3px;
}

/* Hierarchy tree */
.tree {
  flex: 1;
  min-width: 0;
  overflow: hidden;
  padding-top: 1px;
  background: #1a1a1a;
}

.row {
  height: 16px;
  display: flex;
  align-items: center;
  padding-right: 3px;
  font-size: 13px;
  color: #aaa;
}

.row.bold {
  font-weight: 700;
  color: #bdbdbd;
}

.row.hover {
  background: #242424;
}

.lv0 { padding-left: 5px; }
.lv1 { padding-left: 15px; }
.lv1b { padding-left: 25px; }
.lv2 { padding-left: 39px; }
.lv3 { padding-left: 49px; }

.row .arrow.down {
  margin-right: 4px;
}

.lv0 .arrow.down {
  margin-right: 5px;
}

.ico {
  width: 14px;
  height: 14px;
  margin-right: 3px;
}

.ico.btn {
  height: 11px;
}

.name {
  flex: 1;
  min-width: 0;
  overflow: hidden;
  white-space: nowrap;
}

.lock {
  width: 12px;
  height: 11px;
  margin: -2px 7px 0 1px;
}

.eye {
  width: 13px;
  height: 9px;
}

/* Designer canvas */
.canvas {
  flex: none;
  width: 1125px;
  margin-right: 4px;
  display: grid;
  grid-template-columns: 19px 1fr;
  grid-template-rows: 18px 1fr;
  background: #242424;
}

.ruler-corner {
  background: #2e2e2e linear-gradient(135deg, #1c7de0 6px, transparent 6px);
}

.ruler-top {
  position: relative;
  border-bottom: 1px solid #666;
  background:
    linear-gradient(to right, #666 1px, transparent 1px) 62px 100% / 125px 7px repeat-x,
    linear-gradient(to right, #666 1px, transparent 1px) 6px 100% / 25px 3px repeat-x,
    linear-gradient(to right, #1a1a1a 2px, transparent 2px) 81px 0 / 160px 100% repeat-x,
    #2f2f2f;
}

.rt-label {
  position: absolute;
  top: 2px;
  font-size: 10px;
  color: #8a8a8a;
  transform: translateX(-50%);
}

.rt-0 { left: 81px; }
.rt-500 { left: 331px; }
.rt-1000 { left: 581px; }
.rt-1500 { left: 831px; }
.rt-2000 { left: 1081px; }

.rt-green {
  position: absolute;
  left: 783px;
  top: 0;
  width: 2px;
  height: 17px;
  background: #10c010;
}

.ruler-left {
  position: relative;
  border-right: 1px solid #666;
  background:
    linear-gradient(to bottom, #666 1px, transparent 1px) 100% 52px / 7px 125px repeat-y,
    linear-gradient(to bottom, #666 1px, transparent 1px) 100% 2px / 3px 25px repeat-y,
    linear-gradient(to bottom, #1a1a1a 2px, transparent 2px) 0 17px / 100% 160px repeat-y,
    #2a2a2a;
}

.rl-label {
  position: absolute;
  left: 4px;
  font-size: 10px;
  line-height: 11px;
  color: #8a8a8a;
}

.rl-0 { top: 171px; }
.rl-500 { top: 411px; }
.rl-1000 { top: 655px; }

.rl-green {
  position: absolute;
  left: 0;
  top: 365px;
  width: 18px;
  height: 2px;
  background: #10c010;
}

.stage {
  position: relative;
  overflow: hidden;
  background-color: #242424;
  background-image:
    linear-gradient(to right, #161616 2px, transparent 2px),
    linear-gradient(to bottom, #161616 2px, transparent 2px),
    linear-gradient(to right, #2a2a2a 1px, transparent 1px),
    linear-gradient(to bottom, #2a2a2a 1px, transparent 1px);
  background-size: 160px 160px, 160px 160px, 16px 16px, 16px 16px;
  background-position: 80px 16px, 80px 16px, 1px 1px, 1px 1px;
}

.zoom-text {
  position: absolute;
  left: 5px;
  top: 0;
  display: flex;
  align-items: center;
  gap: 39px;
  font-size: 20px;
  font-weight: 700;
  color: #4c4c4c;
  font-feature-settings: normal;
}

.zoom-size {
  font-size: 18px;
}

.stage-tools {
  position: absolute;
  left: 639px;
  top: 2px;
  display: flex;
  z-index: 2;
}

.pill {
  height: 22px;
  display: flex;
  align-items: center;
  overflow: hidden;
  border: 1px solid #161616;
  border-radius: 11px;
  background: #363636;
  font-size: 13px;
  color: #bdbdbd;
}

.pill + .pill { margin-left: 8px; }

.seg {
  height: 100%;
  display: flex;
  align-items: center;
  justify-content: center;
}

.seg.on { background: #0a60c4; }
.seg + .seg { border-left: 1px solid #1c1c1c; }
.seg-globe { width: 25px; }
.seg-nashi { width: 28px; }
.seg-box { width: 23px; }
.seg-lock { width: 23px; }
.seg-r { width: 23px; font-weight: 700; }
.seg-four { width: 15px; }

.pill.round {
  width: 22px;
  justify-content: center;
  margin-left: 1px;
}

.pill.round.dim {
  background: #2b2b2b;
}

.pill.select {
  justify-content: space-between;
  padding: 0 6px 0 1px;
  white-space: nowrap;
  font-feature-settings: normal;
}

.pill.size-sel { width: 86px; margin-left: 2px; font-size: 12.500px; }
.pill.fill-sel { width: 86px; margin-left: 5px; font-size: 13.500px; }

/* The widget tree drawn on the canvas */
.design {
  position: absolute;
  left: 81px;
  top: 177px;
  width: 959px;
  height: 540px;
  background: #565656;
  outline: 1px dashed #b0b0b0;
  outline-offset: -1px;
  font-feature-settings: normal;
}

.w-image {
  position: absolute;
  background: #8795ff;
}

.img-stage { left: 4px; top: 148px; width: 152px; height: 390px; }
.img-c1 { left: 164px; top: 2px; width: 152px; height: 320px; }
.img-c2 { left: 322px; top: 4px; width: 152px; height: 317px; }
.img-c3 { left: 482px; top: 2px; width: 152px; height: 315px; }

.img-c4 {
  left: 641px;
  top: 0;
  width: 157px;
  height: 322px;
  border: 2px solid #00b8f0;
  box-shadow: inset 0 0 0 1px #555;
}

.w-text {
  position: absolute;
  margin-top: 1px;
  font-size: 16px;
  line-height: 20px;
  color: #eee;
  white-space: nowrap;
}

.w-text b { font-family: Roboto, sans-serif; }

.big {
  font-size: 24px;
  line-height: 30px;
}

.name-stage { left: 14px; top: 5px; }
.stage-desc { left: 6px; top: 33px; line-height: 19.200px; }

.p1 { left: 168px; top: 9px; }
.p2 { left: 326px; top: 11px; }
.p3 { left: 487px; top: 5px; }
.p4 { left: 647px; top: 3px; }

.u1 { left: 172px; top: 325px; }
.u2 { left: 340px; top: 327px; }
.u3 { left: 484px; top: 325px; }
.u4 { left: 645px; top: 327px; }

.s1 { left: 173px; top: 352px; }
.s2 { left: 332px; top: 348px; }
.s3 { left: 499px; top: 352px; }
.s4 { left: 639px; top: 348px; }

.n1 { left: 167px; top: 381px; }
.n2 { left: 332px; top: 381px; }
.n3 { left: 491px; top: 383px; }
.n4 { left: 645px; top: 383px; }

.e1 { left: 168px; top: 408px; }
.e2 { left: 326px; top: 408px; }
.e3 { left: 490px; top: 408px; }
.e4 { left: 639px; top: 408px; }

.cond1 { left: 805px; top: 61px; }
.cond2 { left: 803px; top: 87px; }

.timer {
  left: 817px;
  top: 212px;
  font-size: 48px;
  line-height: 56px;
  font-weight: 700;
  color: #fff;
}

.w-button {
  position: absolute;
  display: flex;
  align-items: center;
  justify-content: center;
  border: 1px solid #d0d0d0;
  background: #b8b8b8;
  color: #f0f0f0;
}

.ready {
  left: 801px;
  top: 4px;
  width: 152px;
  height: 50px;
  font-size: 24px;
  padding: 0 3px 5px 0;
}

.leave {
  left: 813px;
  top: 451px;
  width: 141px;
  height: 78px;
  font-size: 48px;
  padding-bottom: 7px;
}

.off-red, .off-gray {
  position: absolute;
  width: 150px;
  height: 28px;
  border: 1px solid #d0d0d0;
}

.off-red {
  left: 455px;
  top: 744px;
  background: #a00000;
}

.off-gray { background: #b8b8b8; }
.g1 { left: 720px; top: 740px; }
.g2 { left: 824px; top: 762px; }

.resize-cursor {
  position: absolute;
  left: 1045px;
  top: 720px;
}

.device-info {
  position: absolute;
  left: 5px;
  top: 800px;
  display: flex;
  flex-direction: column;
  font-size: 21px;
  line-height: 25px;
  color: #555;
}

.dpi {
  position: absolute;
  right: 10px;
  top: 850px;
  display: flex;
  align-items: center;
  gap: 9px;
  font-size: 21px;
  line-height: 25px;
  color: #555;
}

/* Details panel */
.details {
  flex: 1;
  min-width: 0;
  padding-right: 4px;
  display: flex;
  flex-direction: column;
}

.detail-tab {
  width: 160px;
  padding-left: 6px;
  border-top: 2px solid #0f5aa8;
}

.details-body {
  flex: 1;
  background: #242424;
}

/* Bottom bar */
.statusbar {
  flex: none;
  height: 32px;
  margin-top: 4px;
  display: flex;
  gap: 2px;
  padding-right: 3px;
}

.st-item, .st-fill {
  height: 100%;
  display: flex;
  align-items: center;
  background: #232323;
  font-size: 13px;
  color: #b0b0b0;
}

.st-item span {
  padding-bottom: 2px;
}

.st-fill { flex: 1; }
.st-drawer { width: 152px; padding-left: 11px; gap: 5px; }
.st-anim { width: 122px; padding-left: 10px; gap: 5px; }
.st-log { width: 91px; padding-left: 13px; gap: 5px; }
.st-cmd { width: 398px; padding-left: 14px; gap: 4px; }
.st-unsaved { width: 141px; padding-left: 12px; gap: 5px; }
.st-rev { width: 199px; padding-left: 16px; gap: 7px; }

.cmd-chev { margin-left: 4px; }

.cmd-input {
  width: 300px;
  height: 22px;
  margin-left: 9px;
  padding: 0 0 2px 7px;
  display: flex;
  align-items: center;
  border: 1px solid #2c2c2c;
  border-radius: 4px;
  background: #0f0f0f;
  font-size: 11.500px;
  color: #505050;
}
```
